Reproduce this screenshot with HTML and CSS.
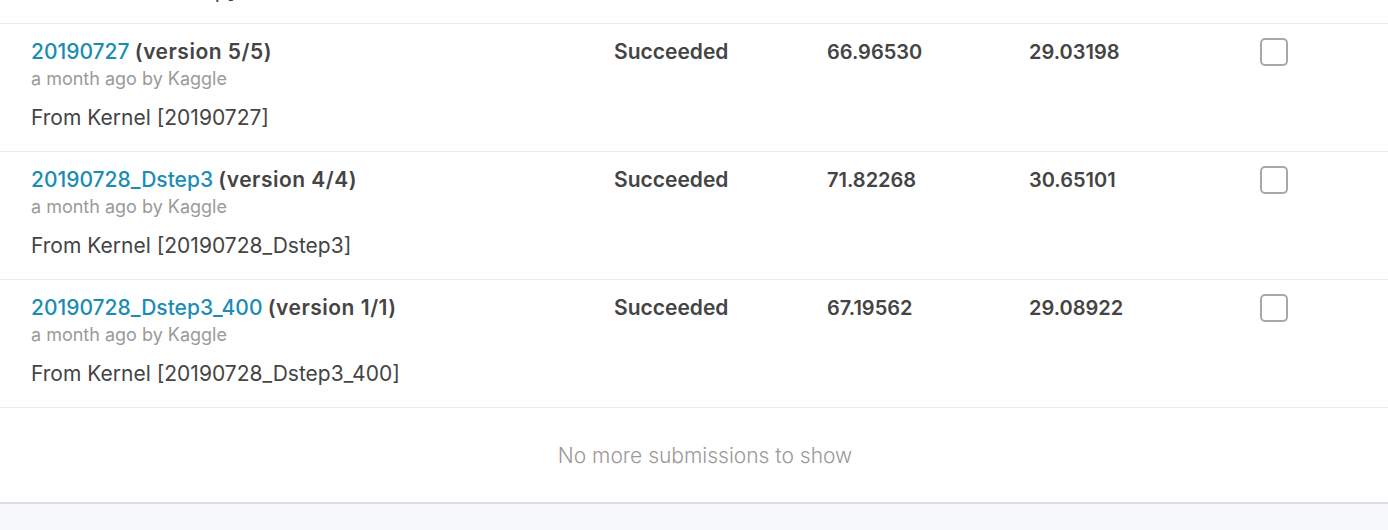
FILE: index.html
```html
<!DOCTYPE html>
<html>
<head>
<meta charset="utf-8">
<link rel="stylesheet" href="styles.css">
</head>
<body>
<div class="list">
  <div class="prev">
    <div class="prev-desc">From Kernel [20_Dp]</div>
  </div>
  <div class="row">
    <div class="cell-main">
      <div class="title"><a class="name" href="#">20190727</a> <span class="ver">(version 5/5)</span></div>
      <div class="meta">a month ago by Kaggle</div>
      <div class="desc">From Kernel [20190727]</div>
    </div>
    <div class="cell status">Succeeded</div>
    <div class="cell">66.96530</div>
    <div class="cell">29.03198</div>
    <div class="cell-check"><span class="box"></span></div>
  </div>
  <div class="row">
    <div class="cell-main">
      <div class="title"><a class="name" href="#">20190728_Dstep3</a> <span class="ver">(version 4/4)</span></div>
      <div class="meta">a month ago by Kaggle</div>
      <div class="desc">From Kernel [20190728_Dstep3]</div>
    </div>
    <div class="cell status">Succeeded</div>
    <div class="cell">71.82268</div>
    <div class="cell">30.65101</div>
    <div class="cell-check"><span class="box"></span></div>
  </div>
  <div class="row">
    <div class="cell-main">
      <div class="title"><a class="name" href="#">20190728_Dstep3_400</a> <span class="ver">(version 1/1)</span></div>
      <div class="meta">a month ago by Kaggle</div>
      <div class="desc">From Kernel [20190728_Dstep3_400]</div>
    </div>
    <div class="cell status">Succeeded</div>
    <div class="cell">67.19562</div>
    <div class="cell">29.08922</div>
    <div class="cell-check"><span class="box"></span></div>
  </div>
  <div class="footer">No more submissions to show</div>
</div>
<div class="page-bottom"></div>
</body>
</html>
```
FILE: styles.css
```css
html, body {
  margin: 0;
  padding: 0;
  background: #f7f8fa;
  font-family: Inter, "Noto Sans", sans-serif;
  color: #3c3c3c;
}

.list {
  background: #fff;
  border-bottom: 2px solid #dadce0;
}

.prev {
  height: 24px;
  overflow: hidden;
  padding-left: 31px;
  border-bottom: 1px solid #ebebeb;
  box-sizing: border-box;
}

.prev-desc {
  font-size: 21px;
  line-height: 24px;
  color: #444;
  margin-top: -21px;
}

.row {
  display: grid;
  grid-template-columns: 583px 213px 202px 231px 28px;
  padding: 0 0 0 31px;
  height: 128px;
  box-sizing: border-box;
  border-bottom: 1px solid #ebebeb;
}

.cell-main {
  padding-top: 16px;
}

.title {
  font-size: 21px;
  line-height: 24px;
  font-weight: 600;
  color: #444;
}

.name {
  color: #1a8db5;
  text-decoration: none;
  font-weight: 500;
}

.ver {
  font-weight: 600;
  letter-spacing: 0.5px;
}

.meta {
  font-size: 18px;
  line-height: 24px;
  color: #9a9a9a;
  margin-top: 3px;
}

.desc {
  font-size: 21px;
  line-height: 24px;
  color: #444;
  margin-top: 15px;
}

.cell {
  padding-top: 16px;
  font-size: 20px;
  line-height: 24px;
  font-weight: 600;
  color: #444;
}

.cell.status {
  font-size: 21px;
}

.cell-check {
  padding-top: 14px;
}

.box {
  display: block;
  width: 28px;
  height: 28px;
  box-sizing: border-box;
  border: 2px solid #a8a8a8;
  border-radius: 5px;
  background: #fff;
}

.footer {
  height: 94px;
  display: flex;
  align-items: center;
  justify-content: center;
  font-size: 21px;
  font-weight: 300;
  color: #999;
  padding-left: 22px;
}

.page-bottom {
  height: 40px;
}
```
